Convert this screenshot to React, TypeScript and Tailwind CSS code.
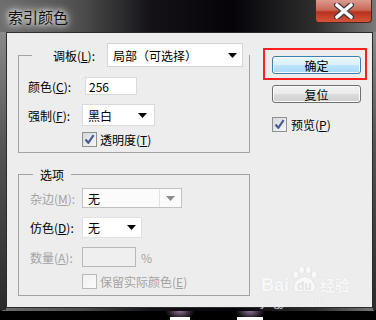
import React from 'react'

function Arrow({ color = '#000' }: { color?: string }) {
  return (
    <svg width="9" height="5" viewBox="0 0 9 5">
      <path d="M0 0 H9 L4.5 5 Z" fill={color} />
    </svg>
  )
}

function Check({ checked, disabled }: { checked?: boolean; disabled?: boolean }) {
  return (
    <span
      className={
        'flex h-[15px] w-[15px] items-center justify-center border ' +
        (disabled
          ? 'border-[#b9b9b9] bg-[linear-gradient(135deg,#f0f0f0,#fbfbfb)]'
          : 'border-[#8e8f8f] bg-[linear-gradient(135deg,#d6d8dc,#f6f7f8)]')
      }
    >
      {checked && (
        <svg width="11" height="11" viewBox="0 0 11 11">
          <path d="M1.5 5.5 L4.3 8.8 L9.6 1.2" fill="none" stroke="#4a5e8e" strokeWidth="2.2" strokeLinejoin="round" />
        </svg>
      )}
    </span>
  )
}

export default function App() {
  return (
    <div className="relative h-[320px] w-[376px] overflow-hidden bg-black font-['Noto_Sans_CJK_SC',sans-serif] text-[12px] leading-[15px] text-black">
      <div className="flex h-[311px] flex-col rounded-b-[4px] bg-[linear-gradient(90deg,#6e6e6e_0%,#4c4c4c_22%,#141217_40%,#050308_62%,#2e2e2e_84%,#7a7a7a_100%)]">
        {/* title bar */}
        <div className="relative h-[32px]">
          <span className="ml-[8px] mt-[6px] inline-block text-[15px] leading-[22px] text-[#111] [text-shadow:0_0_5px_#fff,0_0_9px_#eee,0_0_14px_#ccc]">
            索引颜色
          </span>
          <div className="absolute right-[4px] top-0 flex h-[23px] w-[57px] items-center justify-center rounded-b-[4px] border border-t-0 border-[#4a2420] bg-[linear-gradient(#dc9a8d,#c96a58_45%,#b8321f_55%,#d4553a)]">
            <svg width="22" height="16" viewBox="0 0 22 16">
              <path d="M4 2 L18 14 M18 2 L4 14" stroke="#3b3b4a" strokeWidth="6" strokeLinecap="round" />
              <path d="M4 2 L18 14 M18 2 L4 14" stroke="#ffffff" strokeWidth="3.6" strokeLinecap="round" />
            </svg>
          </div>
        </div>

        <div className="flex">
          <div className="h-[278px] w-[6px] bg-[linear-gradient(#8a8a8a,#555_40%,#2a2a2a)]" />
          {/* client area */}
          <div className="flex h-[276px] w-[367px] items-start border border-[#2a2a2a] bg-[#ededed]">
            <div className="ml-[11px] w-[232px] pt-[10px]">
              <fieldset className="border border-[#a3a3a3] pb-[5px] pl-[9px]">
                <legend className="ml-[4px] flex h-[24px] w-[217px] items-center pl-[21px]">
                  <span className="w-[54px]">
                    调板(<u>L</u>):
                  </span>
                  <div className="flex h-[24px] w-[136px] items-center justify-between border border-[#d6d6d6] bg-white pl-[5px] pr-[5px]">
                    <span>局部（可选择）</span>
                    <Arrow />
                  </div>
                </legend>
                <div className="mt-[10px] flex h-[18px] items-center">
                  <span className="w-[57px]">
                    颜色(<u>C</u>):
                  </span>
                  <div className="flex h-[18px] w-[52px] items-center border border-[#dadada] bg-white pl-[3px]">256</div>
                </div>
                <div className="mt-[9px] flex h-[22px] items-center">
                  <span className="w-[54px]">
                    强制(<u>F</u>):
                  </span>
                  <div className="flex h-[22px] w-[73px] items-center justify-between border border-[#dadada] bg-white pl-[5px] pr-[7px]">
                    <span>黑白</span>
                    <Arrow />
                  </div>
                </div>
                <div className="mt-[6px] flex h-[15px] items-center pl-[54px]">
                  <Check checked />
                  <span className="ml-[3px]">
                    透明度(<u>T</u>)
                  </span>
                </div>
              </fieldset>

              <fieldset className="mt-[14px] border border-[#a3a3a3] pb-[7px] pl-[11px]">
                <legend className="ml-[3px] h-[15px] px-[7px] leading-[15px]">选项</legend>
                <div className="mt-[6px] flex h-[20px] items-center text-[#a3a3a3]">
                  <span className="w-[52px]">
                    杂边(<u>M</u>):
                  </span>
                  <div className="flex h-[20px] w-[100px] items-center border border-[#c2c2c2] bg-[#fbfbfb] text-black">
                    <span className="flex-1 pl-[5px]">无</span>
                    <span className="flex h-full w-[22px] items-center justify-center border-l border-[#e2e2e2]">
                      <Arrow color="#8a8a8a" />
                    </span>
                  </div>
                </div>
                <div className="mt-[9px] flex h-[21px] items-center">
                  <span className="w-[52px]">
                    仿色(<u>D</u>):
                  </span>
                  <div className="flex h-[21px] w-[60px] items-center justify-between border border-[#e0e0e0] bg-white pl-[5px] pr-[5px]">
                    <span>无</span>
                    <Arrow />
                  </div>
                </div>
                <div className="mt-[9px] flex h-[20px] items-center text-[#a3a3a3]">
                  <span className="w-[52px]">
                    数量(<u>A</u>):
                  </span>
                  <div className="h-[20px] w-[54px] border border-[#b8b8b8] bg-[#efefef]" />
                  <span className="ml-[5px]">%</span>
                </div>
                <div className="mt-[7px] flex h-[14px] items-center pl-[52px] text-[#a3a3a3]">
                  <Check disabled />
                  <span className="ml-[3px]">
                    保留实际颜色(<u>E</u>)
                  </span>
                </div>
              </fieldset>
            </div>

            <div className="ml-[22px] flex w-[89px] flex-col pt-[23px]">
              <button className="flex h-[18px] items-center justify-center rounded-[3px] border border-[#3c7fb1] bg-[linear-gradient(#eaf6fd,#d9f0fc_50%,#bee6fd_50%,#a7d9f5)] text-[12px] shadow-[inset_0_0_0_1px_#f4fbff]">
                确定
              </button>
              <button className="mt-[11px] flex h-[18px] items-center justify-center rounded-[3px] border border-[#707070] bg-[linear-gradient(#f2f2f2,#ebebeb_50%,#dddddd_50%,#cfcfcf)] text-[12px] shadow-[inset_0_0_0_1px_#fbfbfb]">
                复位
              </button>
              <div className="mt-[14px] flex h-[14px] items-center">
                <Check checked />
                <span className="ml-[4px]">
                  预览(<u>P</u>)
                </span>
              </div>
            </div>
          </div>
          <div className="h-[278px] w-[3px] bg-[linear-gradient(#8a8a8a,#555_40%,#2a2a2a)]" />
        </div>
      </div>

      {/* bottom desktop strip */}
      <div className="flex h-[9px]">
        <div className="w-[165px]" />
        <div className="flex w-[30px] flex-col items-center bg-[radial-gradient(ellipse_at_top,#8d7396,#000_70%)]">
          <div className="mt-[6px] h-[3px] w-[20px] bg-white" />
        </div>
        <div className="w-[40px]" />
        <div className="flex w-[30px] flex-col items-center bg-[radial-gradient(ellipse_at_top,#8d7396,#000_70%)]">
          <div className="mt-[6px] h-[3px] w-[26px] bg-white" />
        </div>
      </div>

      {/* annotation */}
      <div className="absolute left-[263px] top-[48px] h-[32px] w-[104px] border-2 border-[#ff1f1f]" />

      {/* watermark */}
      <div className="absolute left-[261px] top-[266px] flex flex-col items-start text-[#fbfbfb] opacity-80">
        <div className="flex items-end">
          <span className="font-['Liberation_Sans',sans-serif] text-[18px] font-bold leading-[20px] [text-shadow:0_0_1px_#d0d0d0]">Bai</span>
          <div className="relative mx-[1px] h-[29px] w-[29px]">
            <svg width="29" height="29" viewBox="0 0 30 30" className="absolute left-0 top-0">
              <g fill="#fcfcfc" stroke="#dcdcdc" strokeWidth="0.7">
                <ellipse cx="6" cy="9" rx="3" ry="4" />
                <ellipse cx="12" cy="4" rx="3" ry="4" />
                <ellipse cx="19" cy="4" rx="3" ry="4" />
                <ellipse cx="25" cy="9" rx="3" ry="4" />
                <path d="M15 11 C9 11 3 18 4 23 C5 28 11 27 15 26 C19 27 25 28 26 23 C27 18 21 11 15 11 Z" />
              </g>
            </svg>
            <span className="absolute left-[7px] top-[14px] font-['Liberation_Sans',sans-serif] text-[12px] font-bold leading-[12px] text-[#e0e0e0]">du</span>
          </div>
          <span className="text-[15px] font-bold leading-[20px] [text-shadow:0_0_1px_#d0d0d0]">经验</span>
        </div>
        <span className="mt-[1px] font-['Liberation_Serif',serif] text-[12px] leading-[12px] text-[#f6f6f6] [text-shadow:0_0_1px_#dadada]">
          jingyan.baidu.com
        </span>
      </div>
    </div>
  )
}
